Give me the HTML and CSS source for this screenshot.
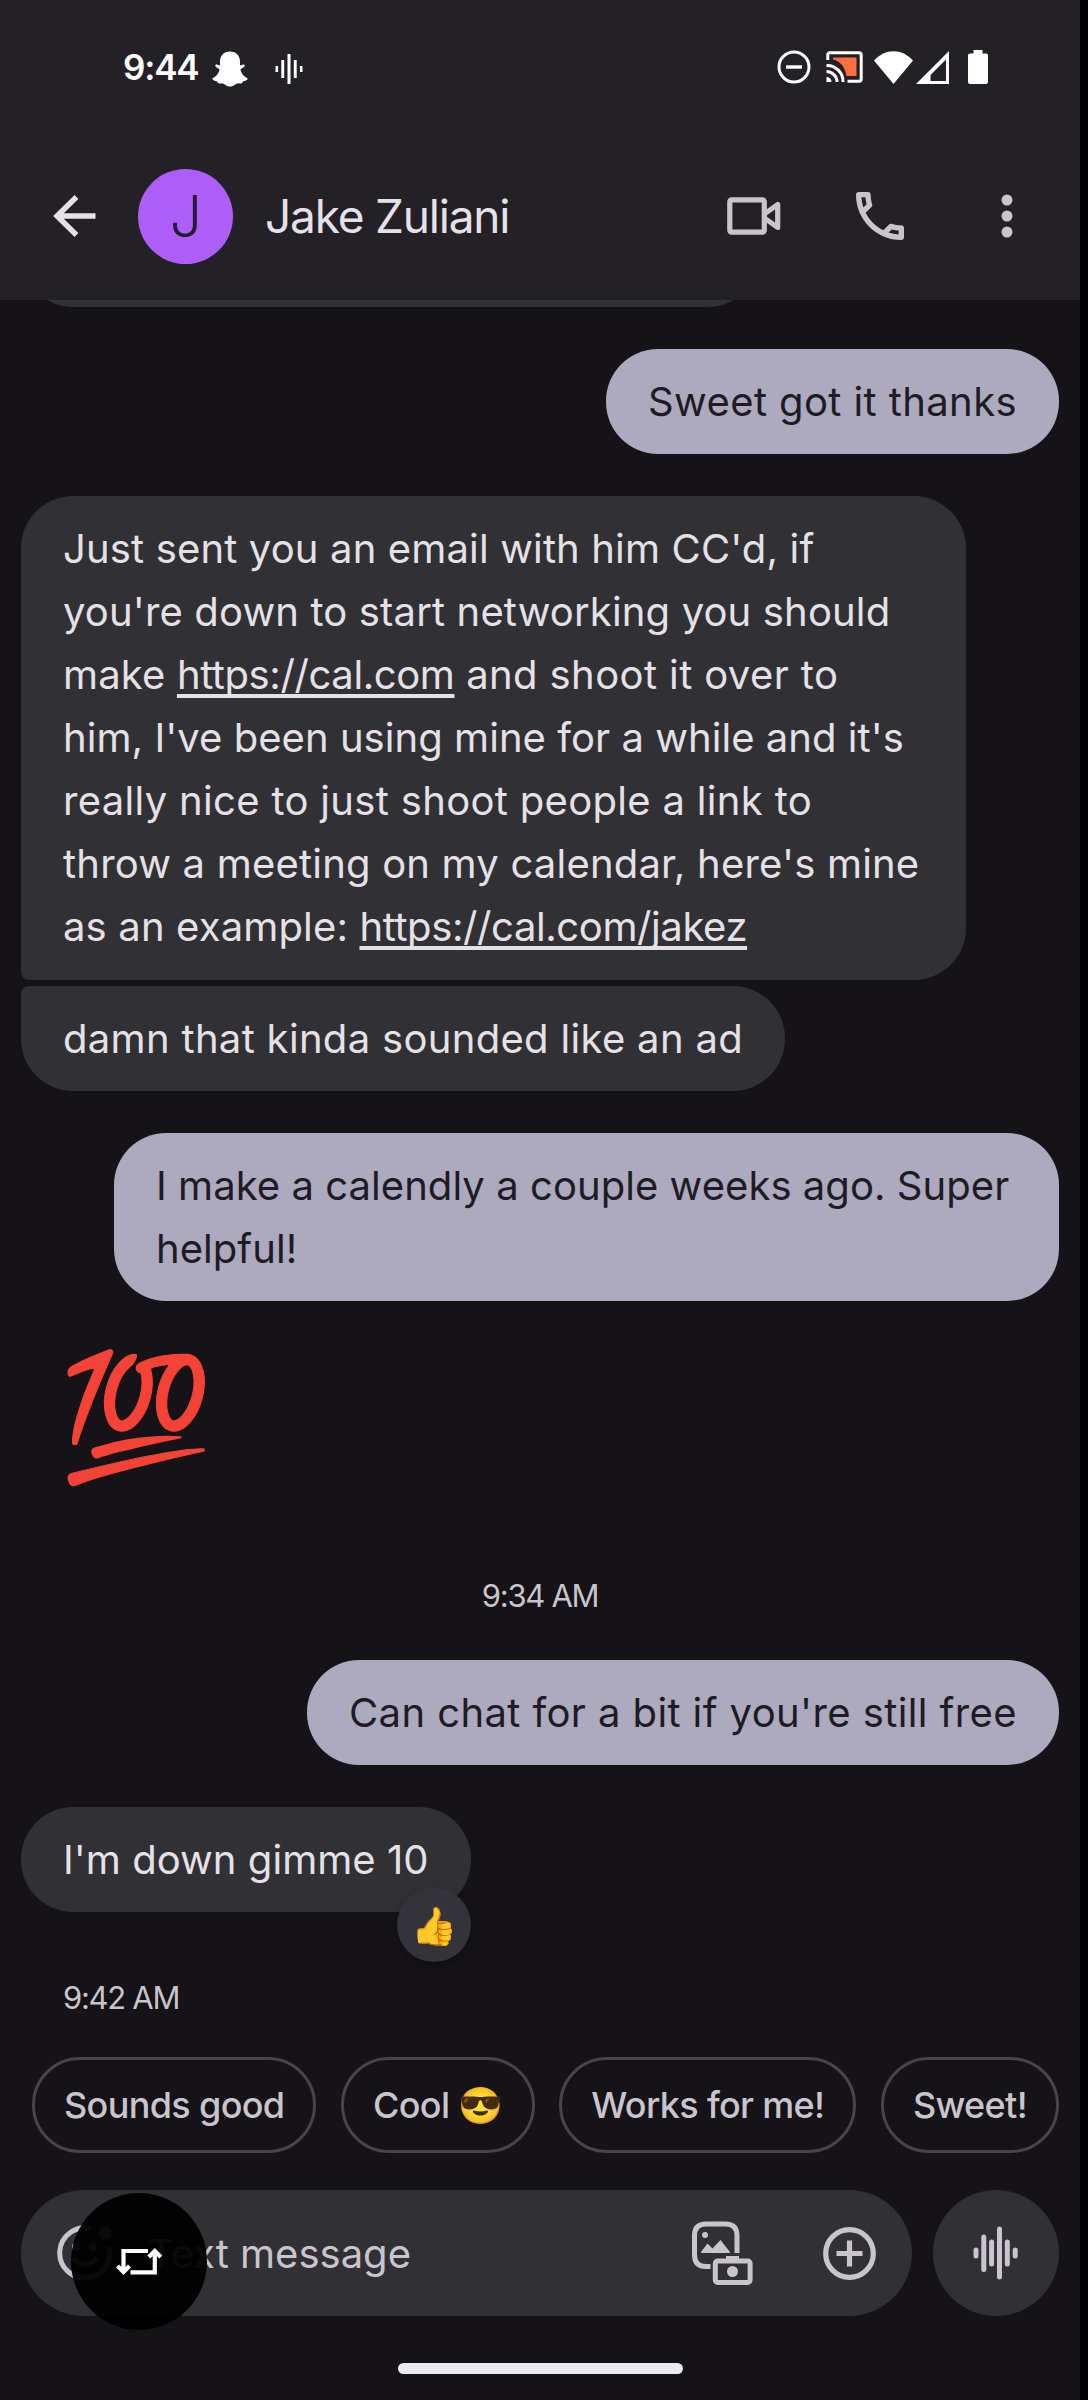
FILE: index.html
```html
<!DOCTYPE html>
<html lang="en">
<head>
<meta charset="utf-8">
<title>Jake Zuliani</title>
<link rel="stylesheet" href="styles.css">
</head>
<body>
<div class="phone">
  <header class="top">
    <div class="status">
      <div class="status-left">
        <span class="clock">9:44</span>
        <svg class="snap" viewBox="0 0 36 36" width="36" height="36"><path fill="#fff" d="M18 0.5C24 .5 28 4.500 28 10.500V14.300C29.500 14.300 31 13.300 32 13.600C33 14 33 15.200 32 16C30.500 17.200 28.500 17.500 28.500 19C29.500 23 32.500 26 35.500 27.300C36 29 33 30 30.800 30.500C30 32.500 29.800 32.800 26.500 32.200C23.500 32.300 22 35.500 18 35.500C14 35.500 12.500 32.300 9.500 32.200C6.200 32.800 6 32.500 5.200 30.500C3 30 0 29 .5 27.300C3.500 26 6.500 23 7.500 19C7.500 17.500 5.500 17.200 4 16C3 15.200 3 14 4 13.600C5 13.300 6.500 14.300 8 14.300V10.500C8 4.500 12 .5 18 .5Z"/></svg>
        <svg class="wave-small" viewBox="0 0 28 30" width="28" height="30"><path fill="#fff" d="M.5 12h2.600v6H.5zM6.300 6h2.900v18H6.300zM12.500 0h3v30h-3zM18.800 6h2.900v18h-2.900zM24.900 12h2.600v6h-2.600z"/></svg>
      </div>
      <div class="status-right">
        <svg viewBox="0 0 34 34" width="34" height="34"><circle cx="17" cy="17" r="15" fill="none" stroke="#fff" stroke-width="3"/><path d="M9 17h16" stroke="#fff" stroke-width="3.400"/></svg>
        <svg class="cast" viewBox="0 0 37 32" width="37" height="32"><path fill="#ff6e40" d="M7 6.500h23.500v18.500H20.500C19 15.500 14 10 7 8.500z"/><path fill="none" stroke="#fff" stroke-width="3" d="M1.800 9V4Q1.800 1.800 4 1.800h29Q35.200 1.800 35.200 4v24Q35.200 30.200 33 30.200H21.500M.5 14.500A16 16 0 0 1 17 31M.5 20.500A10.500 10.500 0 0 1 11 31"/><path fill="#fff" d="M.5 26A5 5 0 0 1 5.500 31H.5z"/></svg>
        <svg class="wifi" viewBox="0 0 39 33" width="39" height="33"><path fill="#fff" d="M0 9.500C11-3 28-3 39 9.500L19.500 33z"/></svg>
        <svg class="signal" viewBox="0 0 33 33" width="33" height="33"><path fill="#fff" fill-rule="evenodd" d="M33 0v33H0zM30 8.500L14.500 24v6H30z"/></svg>
        <svg class="battery" viewBox="0 0 20 34" width="20" height="34"><path fill="#fff" d="M5.500 0h9v3.500H18Q20 3.500 20 5.500V32Q20 34 18 34H2Q0 34 0 32V5.500Q0 3.500 2 3.500H5.500z"/></svg>
      </div>
    </div>
    <div class="bar">
      <svg class="back" viewBox="0 0 43 42" width="43" height="42"><path d="M42.500 21H5M23.500 2L4 21l19.500 19" fill="none" stroke="#e6e1e9" stroke-width="5.400"/></svg>
      <div class="avatar">J</div>
      <h1 class="name">Jake Zuliani</h1>
      <div class="actions">
        <svg viewBox="0 0 54 38" width="54" height="38"><g fill="none" stroke="#cac5cd" stroke-width="5.200" stroke-linejoin="round"><rect x="2.800" y="2.800" width="34.500" height="32.400" rx="2"/><path d="M38 16.500L50.700 7.500v23L38 21.500"/></g></svg>
        <svg class="call" viewBox="3 3 18 18" width="48" height="48"><path fill="#cac5cd" d="M6.540 5c.06.890.21 1.760.450 2.590l-1.200 1.200c-.410-1.200-.670-2.470-.760-3.790h1.510m9.860 12.020c.850.240 1.720.390 2.600.450v1.490c-1.320-.090-2.590-.350-3.800-.750l1.200-1.190M7.500 3H4c-.550 0-1 .450-1 1 0 9.390 7.610 17 17 17 .550 0 1-.450 1-1v-3.490c0-.550-.450-1-1-1-1.240 0-2.450-.200-3.570-.570-.100-.040-.210-.050-.310-.050-.260 0-.510.100-.710.290l-2.200 2.200c-2.830-1.450-5.150-3.760-6.590-6.590l2.200-2.200c.280-.280.360-.670.250-1.020C8.700 6.450 8.500 5.250 8.500 4c0-.550-.450-1-1-1z"/></svg>
        <svg class="more" viewBox="0 0 12 44" width="12" height="44"><g fill="#cac5cd"><circle cx="6" cy="6" r="5.500"/><circle cx="6" cy="22" r="5.500"/><circle cx="6" cy="38" r="5.500"/></g></svg>
      </div>
    </div>
  </header>

  <main class="chat">
    <div class="in peek"></div>
    <p class="bubble out w4">Sweet got it thanks</p>
    <div class="group">
      <p class="bubble in long first">Just sent you an email with him CC'd, if<br>you're down to start networking you should<br>make <a>https://cal.com</a><span class="w4"> and shoot it over to</span><br><span class="w1">him, I've been using mine for a while and it's</span><br><span class="w3">really nice to just shoot people a link to</span><br><span class="w2">throw a meeting on my calendar, here's mine</span><br>as an example: <a>https://cal.com/jakez</a></p>
      <p class="bubble in last w3">damn that kinda sounded like an ad</p>
    </div>
    <p class="bubble out long w1">I make a calendly a couple weeks ago. Super<br>helpful!</p>
    <div class="jumbo">💯</div>
    <time class="stamp centered">9:34 AM</time>
    <p class="bubble out w4">Can chat for a bit if you're still free</p>
    <div class="bubble in reacted w1">I'm down gimme 10<span class="reaction">👍</span></div>
    <time class="stamp">9:42 AM</time>
  </main>

  <div class="chips">
    <span class="chip">Sounds good</span>
    <span class="chip">Cool <i class="cool">😎</i></span>
    <span class="chip">Works for me!</span>
    <span class="chip">Sweet!</span>
  </div>

  <div class="composer">
    <div class="field">
      <svg class="smile" viewBox="0 0 56 56" width="56" height="56"><g fill="none" stroke="#cac5cd" stroke-width="5"><path d="M33 3.500A25 25 0 1 0 52 22"/><path d="M16 33q12 13 24 0"/></g><g fill="#cac5cd"><circle cx="19" cy="22" r="4"/><circle cx="36" cy="22" r="4"/><circle cx="48" cy="8" r="6.500"/></g></svg>
      <span class="placeholder">Text message</span>
      <svg class="gallery" viewBox="0 0 61 64" width="61" height="64"><path fill="none" stroke="#cac5cd" stroke-width="5" d="M18.500 45.500H14Q2.500 45.500 2.500 34V14.500Q2.500 3 14 3H33.500Q45 3 45 14.500V32"/><g fill="#cac5cd"><circle cx="13" cy="14" r="3"/><path d="M9 31l6.500-8.500 5 5L28.500 19 38 31Q38 32 37 32H10Q9 32 9 31zM34 35h13v5H34z"/><circle cx="40.500" cy="50.500" r="5.500"/></g><rect x="23.300" y="40" width="34.800" height="21.500" rx="2.500" fill="none" stroke="#cac5cd" stroke-width="5"/></svg>
      <svg class="plus" viewBox="0 0 53 53" width="53" height="53"><g fill="none" stroke="#cac5cd" stroke-width="5.200"><circle cx="26.500" cy="26.500" r="23.800"/><path d="M13.500 26.500h26M26.500 13.500v26"/></g></svg>
    </div>
    <div class="voice">
      <svg viewBox="0 0 46 54" width="46" height="54"><path fill="none" stroke="#cac5cd" stroke-width="5" stroke-linecap="round" d="M3 24v6M10.800 11v32.500M18.600 16v22M26.500 3v48M34.300 16v22M42.200 24v6"/></svg>
    </div>
    <div class="floating">
      <svg viewBox="0 0 46 27" width="46" height="27"><g fill="none" stroke="#fff" stroke-width="4.200"><path d="M32 3H7.500V22M1.500 18l6 6 6-6M14.500 24.300H38.800V5M32.800 9l6-6 6 6"/></g></svg>
    </div>
  </div>
  <div class="handle"></div>
</div>
</body>
</html>
```
FILE: styles.css
```css
* { box-sizing: border-box; }
body {
  margin: 0;
  background: #000;
  font-family: Inter, "Liberation Sans", sans-serif;
}
p, h1 { margin: 0; font-weight: 400; }
svg { display: block; flex: none; }
.phone {
  width: 1080px;
  height: 2400px;
  background: #151218;
  position: relative;
  overflow: hidden;
}
.top { height: 300px; background: #232126; }

/* status bar */
.status {
  height: 134px;
  padding: 0 92px 0 123px;
  display: flex;
  align-items: center;
  justify-content: space-between;
}
.status-left, .status-right { display: flex; align-items: center; }
.clock {
  width: 89px;
  color: #fff;
  font-size: 35px;
  font-weight: 600;
  letter-spacing: -1.2px;
}
.snap { margin-top: 3px; }
.wave-small { margin: 3px 0 0 27px; }
.cast { margin-left: 15px; }
.wifi { margin-left: 11px; }
.signal { margin-left: 3px; }
.battery { margin-left: 19px; }

/* conversation header */
.bar {
  height: 164px;
  padding-left: 53px;
  display: flex;
  align-items: center;
}
.avatar {
  width: 95px;
  height: 95px;
  margin-left: 42px;
  padding-left: 1px;
  border-radius: 50%;
  background: #ae5ef8;
  color: #251b33;
  font-size: 57px;
  font-weight: 300;
  line-height: 95px;
  text-align: center;
}
.name {
  margin-left: 32px;
  color: #e6e1e9;
  font-size: 46px;
  letter-spacing: -1.2px;
}
.actions {
  margin-left: auto;
  padding-right: 67px;
  display: flex;
  align-items: center;
}
.call { margin-left: 75px; }
.more { margin-left: 97px; }

/* messages */
.chat {
  padding: 0 21px;
  display: flex;
  flex-direction: column;
  align-items: flex-start;
}
.bubble {
  padding: 21px 42px;
  border-radius: 52px;
  font-size: 40px;
  line-height: 63px;
  letter-spacing: 0.15px;
  white-space: nowrap;
}
.in { background: #313035; color: #e6e1e6; }
.out {
  margin-top: 42px;
  align-self: flex-end;
  background: #ada9be;
  color: #1e1b25;
}
.peek {
  width: 739px;
  height: 7px;
  clip-path: inset(0);
  background: none;
  position: relative;
}
.peek::before {
  content: "";
  position: absolute;
  left: 0;
  right: 0;
  bottom: 0;
  height: 105px;
  border-radius: 52px;
  background: #313035;
}
.group {
  margin-top: 42px;
  display: flex;
  flex-direction: column;
  align-items: flex-start;
  gap: 6px;
}
.long { width: 945px; }
.long.in { padding-bottom: 22px; }
.first { border-bottom-left-radius: 8px; }
.last { border-top-left-radius: 8px; }
.w1 { letter-spacing: 0.05px; }
.w2 { letter-spacing: 0.2px; }
.w3 { letter-spacing: 0.32px; }
.w4 { letter-spacing: 0.4px; }
a {
  letter-spacing: -0.4px;
  text-decoration: underline;
  text-decoration-thickness: 3.5px;
  text-underline-offset: 5px;
  text-decoration-skip-ink: none;
}
.jumbo {
  height: 260px;
  padding: 34px 0 0 38px;
  font-size: 124px;
  line-height: 160px;
}
.stamp {
  margin-left: 42px;
  color: #c9c5ca;
  font-size: 31px;
  line-height: 42px;
  letter-spacing: -1.3px;
}
.stamp.centered { margin: 14px 0 0; align-self: center; }
.stamp.centered + .out { margin-top: 43px; }
.reacted { margin-top: 42px; position: relative; }
.reacted + .stamp { margin-top: 65px; }
.reaction {
  position: absolute;
  right: 0;
  bottom: -50px;
  width: 74px;
  height: 74px;
  border-radius: 50%;
  background: #35333a;
  box-shadow: 0 4px 8px rgba(0, 0, 0, 0.25);
  font-size: 37px;
  line-height: 76px;
  text-align: center;
}

/* suggested replies */
.chips {
  margin: 38px 21px 0 32px;
  display: flex;
  justify-content: space-between;
}
.chip {
  height: 96px;
  padding: 0 29px;
  border: 3px solid #47444b;
  border-radius: 48px;
  color: #cac5cd;
  font-size: 36px;
  font-weight: 500;
  line-height: 90px;
  letter-spacing: -0.65px;
  white-space: nowrap;
}
.cool { font-style: normal; font-size: 36px; }

/* message composer */
.composer {
  margin: 37px 21px 0;
  display: flex;
  justify-content: space-between;
  position: relative;
}
.field {
  width: 891px;
  height: 126px;
  padding: 0 36px;
  border-radius: 63px;
  background: #313035;
  display: flex;
  align-items: center;
}
.placeholder {
  margin-left: 35px;
  color: #cac5cd;
  font-size: 40px;
}
.gallery { margin-left: auto; }
.plus { margin-left: 70px; }
.voice {
  width: 126px;
  height: 126px;
  border-radius: 50%;
  background: #313035;
  display: grid;
  place-items: center;
}
.floating {
  position: absolute;
  left: 50px;
  top: 3px;
  width: 136px;
  height: 137px;
  border-radius: 50%;
  background: rgba(0, 0, 0, 0.95);
  display: grid;
  place-items: center;
}
.handle {
  width: 285px;
  height: 11px;
  margin: 47px auto 0;
  border-radius: 6px;
  background: #ececee;
}
```
